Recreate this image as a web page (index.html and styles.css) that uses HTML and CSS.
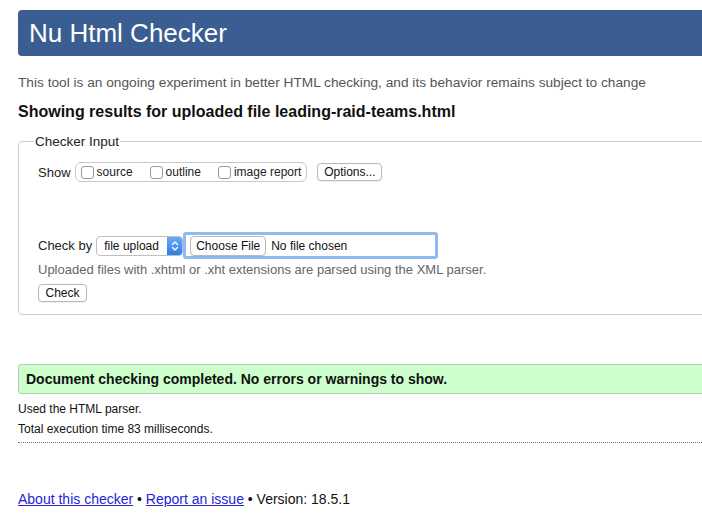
FILE: index.html
```html
<!DOCTYPE html>
<html>
<head>
<meta charset="utf-8">
<link rel="stylesheet" href="styles.css">
</head>
<body>
<div class="page">
  <h1 class="banner">Nu Html Checker</h1>
  <p class="intro">This tool is an ongoing experiment in better HTML checking, and its behavior remains subject to change</p>
  <h2 class="results-title">Showing results for uploaded file leading-raid-teams.html</h2>
  <fieldset class="input-box">
    <legend>Checker Input</legend>
    <div class="row show-row">
      <span class="label">Show</span>
      <span class="check-group">
        <label class="opt"><span class="cb"></span>source</label>
        <label class="opt"><span class="cb"></span>outline</label>
        <label class="opt"><span class="cb"></span>image report</label>
      </span>
      <span class="btn options-btn">Options...</span>
    </div>
    <div class="row checkby-row">
      <span class="label">Check by</span>
      <span class="select"><span class="select-text">file upload</span><span class="select-arrow"><svg width="8" height="12" viewBox="0 0 8 12"><path d="M1.5 4.5 L4 2 L6.5 4.5 M1.5 7.5 L4 10 L6.5 7.5" fill="none" stroke="#fff" stroke-width="1.4" stroke-linecap="round" stroke-linejoin="round"/></svg></span></span>
      <span class="file-input"><span class="btn file-btn">Choose File</span><span class="file-none">No file chosen</span></span>
    </div>
    <p class="note">Uploaded files with .xhtml or .xht extensions are parsed using the XML parser.</p>
    <span class="btn check-btn">Check</span>
  </fieldset>
  <div class="success">Document checking completed. No errors or warnings to show.</div>
  <p class="detail detail-first">Used the HTML parser.</p>
  <p class="detail">Total execution time 83 milliseconds.</p>
  <hr class="dotted">
  <p class="footer"><a href="#">About this checker</a> • <a href="#">Report an issue</a> • Version: 18.5.1</p>
</div>
</body>
</html>
```
FILE: styles.css
```css
html, body {
  margin: 0;
  padding: 0;
  overflow: hidden;
  background: #fff;
}
body {
  font-family: "Liberation Sans", Arial, sans-serif;
  color: #222;
}
.page {
  width: 780px;
  padding: 10px 0 0 18px;
}
.banner {
  margin: 0;
  height: 46px;
  line-height: 47px;
  background: #3a5e91;
  color: #fff;
  font-size: 26px;
  font-weight: normal;
  padding-left: 11px;
  border-radius: 4px;
}
.intro {
  margin: 18px 0 0;
  font-size: 13.7px;
  line-height: 18px;
  color: #555;
}
.results-title {
  margin: 10px 0 0;
  font-size: 16px;
  line-height: 20px;
  font-weight: bold;
  color: #111;
}
.input-box {
  margin: 12px 0 0;
  border: 1px solid #ccc;
  border-radius: 4px;
  padding: 13px 19px 12px;
  min-width: 0;
}
.input-box legend {
  font-size: 13.5px;
  padding: 0 1px;
  margin-left: -4px;
  color: #222;
}
.row {
  display: flex;
  align-items: center;
}
.label {
  font-size: 13px;
  margin-right: 4px;
}
.check-group {
  display: inline-flex;
  align-items: center;
  height: 18px;
  border: 1px solid #c8c8c8;
  border-radius: 6px;
  padding: 0 5px;
}
.opt {
  display: inline-flex;
  align-items: center;
  font-size: 12px;
  color: #222;
  margin-right: 17px;
}
.opt:last-child {
  margin-right: 0;
}
.cb {
  width: 11px;
  height: 11px;
  border: 1px solid #9a9a9a;
  border-radius: 3px;
  margin-right: 3px;
  background: #fff;
}
.btn {
  display: inline-flex;
  align-items: center;
  justify-content: center;
  font-size: 12px;
  color: #111;
  background: #fff;
  border: 1px solid #b8b8b8;
  border-radius: 4px;
  height: 16px;
  box-shadow: 0 1px 0 rgba(0,0,0,0.05);
}
.options-btn {
  margin-left: 10px;
  width: 63px;
}
.checkby-row {
  margin-top: 50px;
}
.select {
  display: inline-flex;
  align-items: stretch;
  height: 18px;
  width: 85px;
  border: 1px solid #c0c0c0;
  border-radius: 4px;
  overflow: hidden;
  font-size: 12px;
  background: #fff;
}
.select-text {
  flex: 1;
  display: flex;
  align-items: center;
  padding-left: 7px;
  color: #111;
}
.select-arrow {
  width: 15px;
  display: flex;
  align-items: center;
  justify-content: center;
  background: linear-gradient(#6aa9f5, #2f7de6);
}
.file-input {
  display: inline-flex;
  align-items: center;
  width: 245px;
  height: 21px;
  border: 3px solid #8fbbf2;
  border-radius: 3px;
  padding-left: 4px;
}
.file-btn {
  width: 74px;
  height: 18px;
}
.file-none {
  font-size: 12px;
  margin-left: 5px;
  color: #111;
}
.note {
  margin: 2px 0 0;
  font-size: 13px;
  line-height: 18px;
  color: #666;
}
.check-btn {
  margin-top: 5px;
  width: 47px;
}
.success {
  margin-top: 49px;
  height: 28px;
  line-height: 28px;
  background: #ccffcc;
  border: 1px solid #b5ccb5;
  border-radius: 3px;
  padding-left: 7px;
  font-size: 14px;
  font-weight: bold;
  color: #111;
}
.detail {
  margin: 0;
  font-size: 12px;
  line-height: 20px;
  color: #111;
}
.detail-first {
  margin-top: 5px;
}
.dotted {
  margin: 3px 0 0;
  border: 0;
  border-top: 1px dotted #777;
  height: 0;
}
.footer {
  margin: 47px 0 0;
  font-size: 14px;
  line-height: 18px;
  color: #111;
}
.footer a {
  color: #2424d8;
  text-decoration: underline;
}
```
